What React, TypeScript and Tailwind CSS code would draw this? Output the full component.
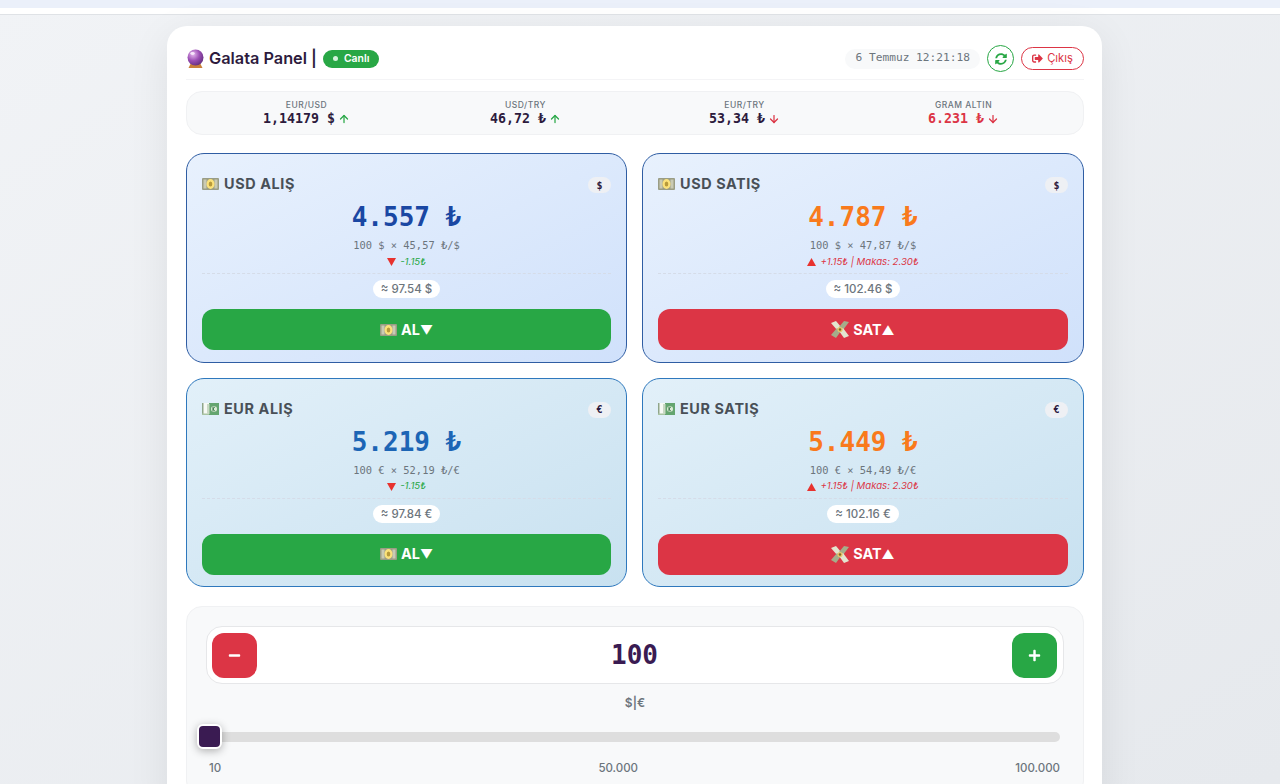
import { ArrowDown, ArrowUp } from 'lucide-react';
import { FaMinus, FaPlus, FaSignOutAlt, FaSyncAlt } from 'react-icons/fa';

const MONO = 'font-["DejaVu_Sans_Mono",monospace]';

const TICKERS = [
  { label: 'EUR/USD', value: '1,14179 $', up: true, valueClass: 'text-[#2d1b3d]' },
  { label: 'USD/TRY', value: '46,72 ₺', up: true, valueClass: 'text-[#2d1b3d]' },
  { label: 'EUR/TRY', value: '53,34 ₺', up: false, valueClass: 'text-[#2d1b3d]' },
  { label: 'GRAM ALTIN', value: '6.231 ₺', up: false, valueClass: 'text-[#dc3545]' },
];

const CARDS = [
  {
    title: 'USD ALIŞ',
    note: 'usd',
    badge: '$',
    price: '4.557 ₺',
    priceClass: 'text-[#1a47a3]',
    calc: '100 $ × 45,57 ₺/$',
    change: '-1.15₺',
    buy: true,
    approx: '≈ 97.54 $',
    bg: 'bg-gradient-to-br from-[#e8f1fd] to-[#d0e1fb]',
    border: 'border-[#2f5da3]',
  },
  {
    title: 'USD SATIŞ',
    note: 'usd',
    badge: '$',
    price: '4.787 ₺',
    priceClass: 'text-[#f97a1c]',
    calc: '100 $ × 47,87 ₺/$',
    change: '+1.15₺ | Makas: 2.30₺',
    buy: false,
    approx: '≈ 102.46 $',
    bg: 'bg-gradient-to-br from-[#e8f1fd] to-[#d0e1fb]',
    border: 'border-[#2f5da3]',
  },
  {
    title: 'EUR ALIŞ',
    note: 'eur',
    badge: '€',
    price: '5.219 ₺',
    priceClass: 'text-[#1c65b5]',
    calc: '100 € × 52,19 ₺/€',
    change: '-1.15₺',
    buy: true,
    approx: '≈ 97.84 €',
    bg: 'bg-gradient-to-br from-[#e2f0f9] to-[#c8e1f0]',
    border: 'border-[#2e78bd]',
  },
  {
    title: 'EUR SATIŞ',
    note: 'eur',
    badge: '€',
    price: '5.449 ₺',
    priceClass: 'text-[#f97a1c]',
    calc: '100 € × 54,49 ₺/€',
    change: '+1.15₺ | Makas: 2.30₺',
    buy: false,
    approx: '≈ 102.16 €',
    bg: 'bg-gradient-to-br from-[#e2f0f9] to-[#c8e1f0]',
    border: 'border-[#2e78bd]',
  },
];

function CrystalBall() {
  return (
    <svg width="19" height="20" viewBox="0 0 19 20" className="shrink-0">
      <defs>
        <radialGradient id="ball" cx="0.35" cy="0.3" r="0.8">
          <stop offset="0" stopColor="#e6b8ee" />
          <stop offset="0.5" stopColor="#9c4fb5" />
          <stop offset="1" stopColor="#5c2a78" />
        </radialGradient>
      </defs>
      <path d="M4.5 15h10l2 4h-14z" fill="#c9803a" />
      <circle cx="9.5" cy="8.5" r="8" fill="url(#ball)" />
      <ellipse cx="6.5" cy="4.5" rx="2.2" ry="1.4" fill="#f7e6fb" />
    </svg>
  );
}

function UsdNote() {
  return (
    <svg width="17" height="12" viewBox="0 0 17 12" className="shrink-0">
      <rect width="17" height="12" rx="1" fill="#9a9d85" />
      <rect x="1.5" y="1.5" width="3" height="9" fill="#c9cab4" />
      <rect x="12.5" y="1.5" width="3" height="9" fill="#c9cab4" />
      <ellipse cx="8.5" cy="6" rx="4" ry="5" fill="#fbe27a" />
      <ellipse cx="8.5" cy="6" rx="1.8" ry="2.6" fill="#b89a3a" />
    </svg>
  );
}

function EurNote() {
  return (
    <svg width="17" height="12" viewBox="0 0 17 12" className="shrink-0">
      <rect width="7" height="12" fill="#f7faf5" />
      <rect x="0" y="0" width="1.5" height="12" fill="#8fa58a" />
      <rect x="0" y="10.5" width="7" height="1.5" fill="#a9c4a3" />
      <rect x="7" y="0" width="10" height="12" fill="#64a56f" />
      <rect x="5" y="1" width="2.5" height="10" fill="#c9d9c4" />
      <circle cx="12" cy="6" r="3" fill="#dcebd6" />
      <path d="M11 3.5v5M13 3.5l-2 2.5 2 2.5" stroke="#3f7d4c" fill="none" />
    </svg>
  );
}

function FlyingMoney() {
  return (
    <svg width="18" height="17" viewBox="0 0 18 17" className="shrink-0">
      <path d="M0 2l5-2 5 6-4 3z" fill="#e3e5cf" />
      <path d="M18 1l-5-1-5 6 4 3z" fill="#a5ad8a" />
      <path d="M0 14l5 3 5-7-4-3z" fill="#a5ad8a" />
      <path d="M18 15l-5 2-5-7 4-3z" fill="#e3e5cf" />
      <circle cx="9" cy="8.5" r="2.6" fill="#e9c46a" />
      <circle cx="9" cy="8.5" r="1.2" fill="#7a6a2c" />
    </svg>
  );
}

function RedTriangle({ down }: { down: boolean }) {
  return (
    <svg width="9" height="8" viewBox="0 0 9 8" className="shrink-0">
      <path d={down ? 'M0 0h9L4.5 8z' : 'M4.5 0L9 8H0z'} fill="#e8322e" />
    </svg>
  );
}

function RateCard({ card }: { card: (typeof CARDS)[number] }) {
  const Note = card.note === 'usd' ? UsdNote : EurNote;

  return (
    <div className={`h-[209.6px] rounded-[18px] border px-[15px] pt-[20px] ${card.bg} ${card.border}`}>
      <div className="flex h-[20px] items-center justify-between">
        <div className="flex items-center gap-[5px]">
          <Note />
          <span className="text-[14.4px] font-bold tracking-[0.6px] text-[#495057]">{card.title}</span>
        </div>
        <span className={`mt-[2px] flex h-[16px] w-[23px] items-center justify-center rounded-full bg-[#eef0f4] text-[10px] font-bold text-[#2d1b3d] ${MONO}`}>
          {card.badge}
        </span>
      </div>

      <div className={`mt-[8px] h-[31px] text-center text-[26px] leading-[31px] font-bold ${card.priceClass} ${MONO}`}>
        {card.price}
      </div>
      <div className={`mt-[5px] text-center text-[10.4px] leading-[14px] text-[#6c757d] ${MONO}`}>{card.calc}</div>
      <div className="mt-[3px] flex h-[14px] items-center justify-center gap-[4px]">
        <RedTriangle down={card.buy} />
        <span className={`text-[9.6px] italic ${card.buy ? 'text-[#28a745]' : 'text-[#dc3545]'}`}>{card.change}</span>
      </div>

      <div className="mt-[4px] flex justify-center border-t border-dashed border-[#d5dce8] pt-[6px]">
        <span className="h-[18px] rounded-full bg-white px-[8px] text-[11.5px] leading-[18px] font-medium text-[#6c757d]">
          {card.approx}
        </span>
      </div>

      <button
        type="button"
        className={`mt-[11px] flex h-[41px] w-full items-center justify-center gap-[4px] rounded-[12px] text-[14.4px] font-bold text-white ${
          card.buy ? 'bg-[#28a745]' : 'bg-[#dc3545]'
        }`}
      >
        {card.buy ? <UsdNote /> : <FlyingMoney />}
        <span>
          {card.buy ? 'AL' : 'SAT'}
          <span className="text-[12.5px]">{card.buy ? '▼' : '▲'}</span>
        </span>
      </button>
    </div>
  );
}

export default function App() {
  return (
    <div className="h-[784px] overflow-hidden bg-gradient-to-br from-[#f1f3f6] to-[#e6e9ed] pr-[11px] font-['Inter',sans-serif]">
      <div className="-mr-[11px] h-[8px] bg-[#ebf0fa]" />
      <div className="-mr-[11px] h-[7px] border-b border-[#dfe2e6] bg-white" />

      <div className="mx-auto mt-[11px] w-[935px] rounded-[20px] bg-white pt-[10px] pr-[18px] pb-[20px] pl-[19px] shadow-[0_10px_40px_rgba(0,0,0,0.08)]">
        <header className="flex h-[44px] items-center justify-between border-b border-[#f4f4f6] pt-[2px]">
          <div className="flex items-center gap-[6px]">
            <div className="flex items-center gap-[4px]">
              <CrystalBall />
              <h1 className="text-[16.3px] font-semibold text-[#2d1b3d]">Galata Panel |</h1>
            </div>
            <span className="flex h-[18px] items-center gap-[6px] rounded-full bg-[#28a745] px-[10px] text-[10.4px] font-semibold text-white">
              <span className="h-[5px] w-[5px] rounded-full bg-[#d5f2dc]" />
              Canlı
            </span>
          </div>

          <div className="flex items-center gap-[7px]">
            <span className={`flex h-[20px] items-center rounded-full bg-[#f8f9fa] px-[10px] text-[11.2px] text-[#6c757d] ${MONO}`}>
              6 Temmuz 12:21:18
            </span>
            <button
              type="button"
              className="flex h-[27px] w-[27px] items-center justify-center rounded-full border border-[#28a745] text-[#28a745]"
            >
              <FaSyncAlt size={12} />
            </button>
            <button
              type="button"
              className="flex h-[23px] w-[63px] items-center justify-center gap-[4px] rounded-full border border-[#dc3545] text-[11.2px] text-[#dc3545]"
            >
              <FaSignOutAlt size={11} />
              Çıkış
            </button>
          </div>
        </header>

        <section className="mt-[11px] grid h-[44px] grid-cols-4 rounded-[16px] border border-[#f0f1f3] bg-[#f8f9fa] px-[10px] pt-[8px]">
          {TICKERS.map((ticker) => (
            <div key={ticker.label} className="text-center">
              <div className="text-[8.5px] leading-[11px] font-medium tracking-[0.5px] text-[#6c757d]">{ticker.label}</div>
              <div className={`flex items-center justify-center gap-[3px] text-[13.3px] leading-[15px] font-bold ${ticker.valueClass} ${MONO}`}>
                <span>{ticker.value}</span>
                {ticker.up ? (
                  <ArrowUp size={12} strokeWidth={2.5} className="text-[#28a745]" />
                ) : (
                  <ArrowDown size={12} strokeWidth={2.5} className="text-[#dc3545]" />
                )}
              </div>
            </div>
          ))}
        </section>

        <section className="mt-[18px] grid grid-cols-[441px_442px] gap-x-[15px] gap-y-[15px]">
          {CARDS.map((card) => (
            <RateCard key={card.title} card={card} />
          ))}
        </section>

        <section className="mt-[19px] rounded-[16px] border border-[#f0f1f3] bg-[#f8f9fa] px-[19px] pt-[19px] pb-[20px]">
          <div className="flex h-[58px] items-center justify-between rounded-[16px] border border-[#e6e7e9] bg-white pr-[6px] pl-[5px]">
            <button
              type="button"
              className="flex h-[45px] w-[45px] items-center justify-center rounded-[12px] bg-[#dc3545] text-white"
            >
              <FaMinus size={13} />
            </button>
            <span className={`text-[26px] font-bold text-[#3a1b52] ${MONO}`}>100</span>
            <button
              type="button"
              className="flex h-[45px] w-[45px] items-center justify-center rounded-[12px] bg-[#28a745] text-white"
            >
              <FaPlus size={13} />
            </button>
          </div>

          <div className="mt-[11px] text-center text-[12px] leading-[16px] font-semibold text-[#6c757d]">$|€</div>

          <div className="relative mt-[21px] mr-[4px] ml-[-5px] h-[10px] rounded-[5px] bg-[#dedede]">
            <div className="absolute top-[-8px] left-[-4px] h-[25px] w-[25px] rounded-[6px] border-2 border-white bg-[#3a1b52] shadow-[0_2px_8px_rgba(0,0,0,0.3)]" />
          </div>

          <div className="mt-[18px] flex justify-between pr-[4px] pl-[3px] text-[11.5px] leading-[16px] font-medium text-[#6c757d]">
            <span>10</span>
            <span>50.000</span>
            <span>100.000</span>
          </div>
        </section>
      </div>
    </div>
  );
}
